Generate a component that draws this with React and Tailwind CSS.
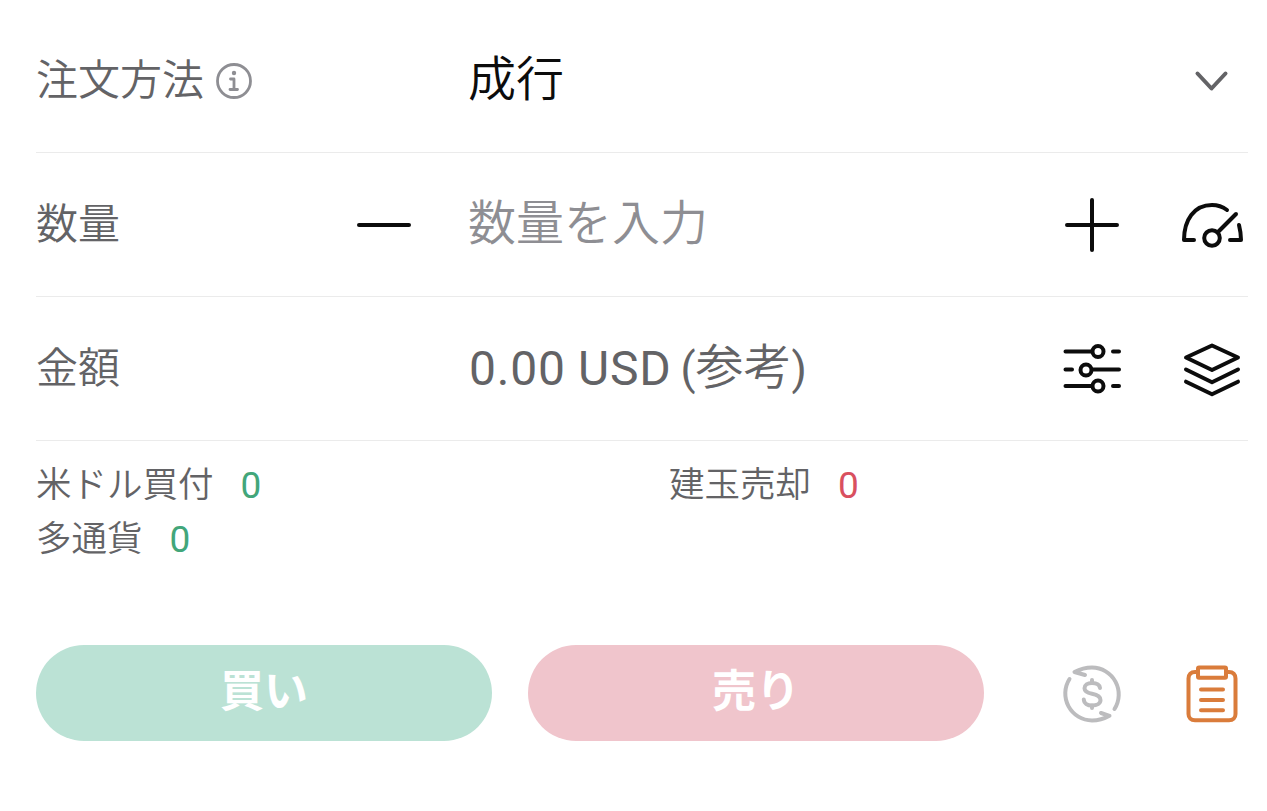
import React from 'react';

const Icon = ({ children, className = 'text-[#0c0c0c]' }) => (
    <svg
        viewBox="0 0 64 64"
        className={`w-16 h-16 shrink-0 ${className}`}
        fill="none"
        stroke="currentColor"
        strokeWidth="4"
        strokeLinecap="round"
        strokeLinejoin="round"
    >
        {children}
    </svg>
);

const MinusIcon = () => (
    <Icon>
        <path d="M7 32H57" />
    </Icon>
);

const PlusIcon = () => (
    <Icon>
        <path d="M7 32H57M32 7V57" />
    </Icon>
);

const ChevronIcon = () => (
    <Icon className="text-[#636366]">
        <path d="M17.5 24.500L31.5 39.500L45.5 24.500" />
    </Icon>
);

const GaugeIcon = () => (
    <Icon>
        <path d="M14 47H4C4 27 14 12 32 12C38 12 43 14 47 17" />
        <path d="M56 21L38 39" />
        <path d="M59 32C60 36 61 41 61 47H50" />
        <circle cx="32" cy="45" r="7.8" />
    </Icon>
);

const SlidersIcon = () => (
    <Icon>
        <path d="M5.5 14.500H31M53 14.500H59" />
        <circle cx="38" cy="14.500" r="5.5" />
        <path d="M5.5 32.500H12M33 32.500H59" />
        <circle cx="26" cy="33" r="5.5" />
        <path d="M5.5 49H31M53 49H59" />
        <circle cx="38" cy="49" r="5.5" />
    </Icon>
);

const LayersIcon = () => (
    <Icon>
        <path d="M32 8.5L58 20.5L32 33L6 20.5Z" />
        <path d="M6 32.500L32 45.200L58 32.500" />
        <path d="M6 44.700L32 57.300L58 44.700" />
    </Icon>
);

const CurrencyIcon = () => (
    <Icon className="text-[#bcbcbe]">
        <path d="M9.500 18A27 27 0 0 0 32 59.500Q41 59.500 49.500 54.800L41 52" />
        <path d="M54.500 48A27 27 0 0 0 32 6.500Q23 6.500 14.500 11L25 14" />
        <path d="M40 27C39.500 23.500 36 22 32 22C27.500 22 24.500 24 24.500 27.300C24.500 31 28 32 32 32.800C36.500 33.700 40.500 35 40.500 39C40.500 42.500 37 44.500 32 44.500C27.500 44.500 24 42.500 23.800 38.500" />
        <path d="M32 19V22M32 44.500V47" />
    </Icon>
);

const ClipboardIcon = () => (
    <Icon className="text-[#da7c3b]">
        <path d="M17 11H15C11 11 8.500 13.500 8.500 17.500V53C8.500 57 11 59.300 15 59.300H49C53 59.300 55.500 57 55.500 53V17.500C55.500 13.500 53 11 49 11H47" />
        <rect x="18" y="6.500" width="28" height="10.300" rx="1" />
        <path d="M21 28.500H43M21 39H43M21 49.300H43" />
    </Icon>
);

const InfoIcon = () => (
    <svg
        viewBox="0 0 36 36"
        className="w-9 h-9 shrink-0 text-[#8e8e93]"
        fill="none"
        stroke="currentColor"
        strokeWidth="2.8"
        strokeLinecap="round"
        strokeLinejoin="round"
    >
        <circle cx="18" cy="18" r="16.500" />
        <circle cx="18" cy="10" r="2.200" fill="currentColor" stroke="none" />
        <path d="M14.500 16H18V26.500M14 26.500H21.500" />
    </svg>
);

const Row = ({ label, info, left, value, valueClass, children }) => (
    <div className="flex items-center h-36 border-b border-[#ebebeb] pr-1">
        <div className="flex items-center gap-3 w-[288px] text-[42px] text-[#636366]">
            <span>{label}</span>
            {info && <InfoIcon />}
        </div>
        <div className="w-[144px] pl-7">{left}</div>
        <div className={`flex-1 text-5xl ${valueClass}`}>
            <span className="relative -top-px">{value}</span>
        </div>
        <div className="flex gap-14">{children}</div>
    </div>
);

const Amount = ({ amount, note }) => (
    <>
        <span className="relative top-px ml-px font-normal tracking-[0.8px] [word-spacing:-0.5px]">
            {amount}
        </span>
        <span className="ml-[9px] text-[44px] font-normal">(</span>
        {note}
        <span className="text-[44px] font-normal">)</span>
    </>
);

const Balance = ({ label, value, color }) => (
    <div className="flex items-center gap-[27px] h-[54px] text-[35.5px]">
        <span className="text-[#636366]">{label}</span>
        <span className={`font-normal text-[37px] ${color}`}>{value}</span>
    </div>
);

const App = () => {
    return (
        <div
            lang="ja"
            className="h-[811px] bg-white pt-[9px] pl-9 pr-[19px] overflow-hidden whitespace-nowrap font-[350] font-[Roboto,'Noto_Sans_CJK_JP',sans-serif]"
        >
            <Row label="注文方法" info value="成行" valueClass="text-[#0c0c0c]">
                <ChevronIcon />
            </Row>
            <Row label="数量" left={<MinusIcon />} value="数量を入力" valueClass="text-[#8e8e93]">
                <PlusIcon />
                <GaugeIcon />
            </Row>
            <Row
                label="金額"
                value={<Amount amount="0.00 USD" note="参考" />}
                valueClass="text-[#636366]"
            >
                <SlidersIcon />
                <LayersIcon />
            </Row>

            <div className="grid grid-cols-[633px_1fr] pt-[18px]">
                <Balance label="米ドル買付" value="0" color="text-[#42a67a]" />
                <Balance label="建玉売却" value="0" color="text-[#d9505f]" />
                <Balance label="多通貨" value="0" color="text-[#42a67a]" />
            </div>

            <div className="flex items-center mt-[78px] pr-1">
                <button className="w-[456px] h-24 pb-0.5 rounded-full bg-[#bbe2d5] text-white text-[44px] font-bold">
                    買い
                </button>
                <button className="w-[456px] h-24 pb-0.5 ml-9 rounded-full bg-[#f0c5cc] text-white text-[44px] font-bold">
                    売り
                </button>
                <div className="flex gap-14 ml-auto">
                    <CurrencyIcon />
                    <ClipboardIcon />
                </div>
            </div>
        </div>
    );
};

export default App;
